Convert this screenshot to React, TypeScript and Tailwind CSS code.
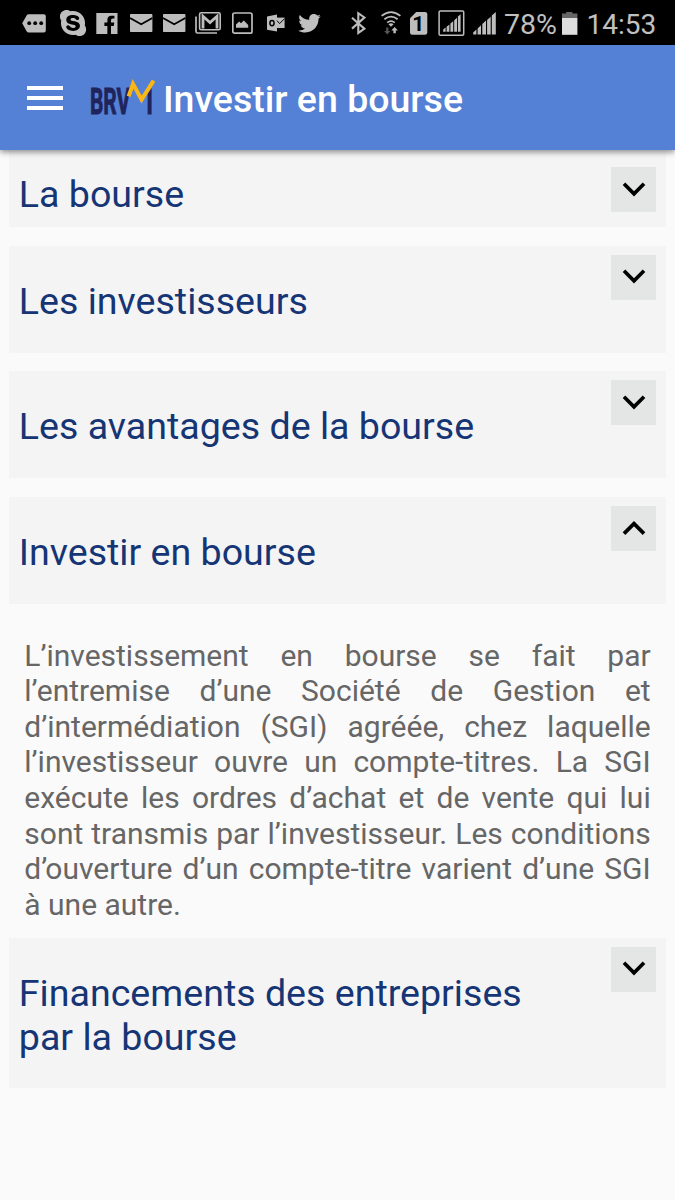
import { useState } from "react";
import type { ReactNode } from "react";
import { FaFacebookF, FaSkype, FaTwitter } from "react-icons/fa";

const GREY = "#bdbdbd";

interface Section {
  title: string;
  body?: string;
}

const SECTIONS: Section[] = [
  { title: "La bourse" },
  { title: "Les investisseurs" },
  { title: "Les avantages de la bourse" },
  {
    title: "Investir en bourse",
    body: "L’investissement en bourse se fait par l’entremise d’une Société de Gestion et d’intermédiation (SGI) agréée, chez laquelle l’investisseur ouvre un compte-titres. La SGI exécute les ordres d’achat et de vente qui lui sont transmis par l’investisseur. Les conditions d’ouverture d’un compte-titre varient d’une SGI à une autre.",
  },
  { title: "Financements des entreprises par la bourse" },
];

// Status bar glyph, the full 45px bar height, w px wide
function Glyph({ w, className, children }: { w: number; className?: string; children: ReactNode }) {
  return (
    <svg
      width={w}
      height={45}
      viewBox={`0 0 ${w} 45`}
      fill={GREY}
      className={`shrink-0 ${className ?? ""}`}
    >
      {children}
    </svg>
  );
}

function Mail({ className }: { className?: string }) {
  return (
    <Glyph w={23} className={className}>
      <rect y="14" width="22.4" height="18" rx="0.8" />
      <path d="M0 18l11.2 6.2L22.4 18" fill="none" stroke="#000" strokeWidth="1.8" />
    </Glyph>
  );
}

function StatusBar() {
  return (
    <div className="flex h-[45px] items-center bg-black pl-[22px] text-[28.5px] leading-[45px] text-[#c0c0c0]">
      <Glyph w={24}>
        <path d="M0.2 23.2L4.6 15.4Q5.3 14.2 6.7 14.2H21.8Q23.8 14.2 23.8 16.2V30.6Q23.8 32.6 21.8 32.6H6.7Q5.3 32.6 4.6 31.3Z" />
        <circle cx="7.2" cy="23.2" r="1.9" fill="#000" />
        <circle cx="13.2" cy="23.2" r="1.9" fill="#000" />
        <circle cx="19.2" cy="23.2" r="1.9" fill="#000" />
      </Glyph>
      <Glyph w={27} className="ml-[14px]">
        <FaSkype x="-2" y="8" size={30} />
      </Glyph>
      <Glyph w={22} className="ml-[9px]">
        <rect y="13" x="0.3" width="21.2" height="21" />
        <FaFacebookF x="4" y="15.4" size={18.8} color="#000" />
      </Glyph>
      <Mail className="ml-[12px]" />
      <Mail className="ml-[10px]" />
      <Glyph w={26} className="ml-[9px]">
        <path d="M1 16.5V31.4Q1 33 2.6 33H22" fill="none" stroke={GREY} strokeWidth="1.7" />
        <rect x="4.6" y="12.8" width="20.6" height="17" rx="1.6" fill="none" stroke={GREY} strokeWidth="1.6" />
        <path d="M8 28.5V16.3L15 22.6L22 16.3V28.5" fill="none" stroke={GREY} strokeWidth="2.8" />
      </Glyph>
      <Glyph w={21} className="ml-[11px]">
        <rect x="0.8" y="13" width="19.2" height="20.2" rx="1.8" fill="none" stroke={GREY} strokeWidth="1.7" />
        <path d="M4 27.7V24.6L7.2 21.4L9 23.2L11.8 20.4L16.2 25V27.7Z" />
      </Glyph>
      <Glyph w={18} className="ml-[14px]">
        <path d="M0 16.4L10 14.6V31.6L0 29.7Z" />
        <rect x="10" y="17.6" width="7.6" height="10.4" />
        <path d="M10 20.6L12.6 23.6L17.6 18.6" fill="none" stroke="#000" strokeWidth="1" />
        <ellipse cx="5" cy="23.1" rx="2.1" ry="2.6" fill="none" stroke="#000" strokeWidth="1.5" />
      </Glyph>
      <Glyph w={23} className="ml-[13px]">
        <FaTwitter x="0.2" y="12" size={22.6} />
      </Glyph>

      <Glyph w={17} className="ml-[30px]">
        <path
          d="M1 17.8L13.4 28.6L7.3 33V13.2L13.4 17.5L1 28.6"
          fill="none"
          stroke={GREY}
          strokeWidth="2.1"
        />
      </Glyph>
      <Glyph w={20} className="ml-[13px]">
        <g fill="none" stroke={GREY} strokeWidth="1.8">
          <path d="M0.6 15.9Q10 8.4 19.4 15.9" />
          <path d="M3.4 19.3Q10 14 16.6 19.3" />
          <path d="M6.2 22.6Q10 19.6 13.8 22.6" />
        </g>
        <path d="M7.4 24.2Q10 22.2 12.6 24.2L10 26.8Z" />
        <path d="M5.2 27.6H7.4V31H9.4L6.3 34.6L3.2 31H5.2Z" fill="#555" />
        <path d="M12.4 33.2H14.8V30.6H16.9L13.6 27L10.3 30.6H12.4Z" />
      </Glyph>
      <Glyph w={18} className="ml-[9px]">
        <path d="M6.2 12H15Q17.3 12 17.3 14.3V32.4Q17.3 34.7 15 34.7H2.3Q0 34.7 0 32.4V18.2Z" />
        <text x="8.4" y="30.8" fontSize="21" fontWeight="700" textAnchor="middle" fill="#000">
          1
        </text>
      </Glyph>
      <Glyph w={27} className="ml-[10px]">
        <rect x="1.1" y="10.9" width="24.6" height="24.4" rx="1.2" fill="none" stroke={GREY} strokeWidth="1.5" />
        <path d="M5.2 31.8V29.6L7.6 27.6V31.8ZM8.6 31.8V26.8L11.4 24.4V31.8ZM12.4 31.8V23.6L15.2 21.2V31.8ZM16.2 31.8V20.3L19 17.8V31.8ZM19.9 31.8V16.6L22.6 14.2V31.8Z" />
      </Glyph>
      <Glyph w={23} className="ml-[8px]">
        <path d="M0.2 34.6V32.4L3.4 29.6V34.6ZM4.6 34.6V28.4L8 25.2V34.6ZM9.3 34.6V24L13 20.6V34.6ZM14.1 34.6V20L17.7 16.8V34.6ZM18.8 34.6V15.4L22.8 12V34.6Z" />
      </Glyph>
      <span className="ml-[8px] w-[52px] shrink-0 whitespace-nowrap pt-[3px]">78%</span>
      <Glyph w={16} className="ml-[6px]">
        <path d="M4.2 12H10.4V13.5H15.4V18H0V13.5H4.2Z" fill="#666" />
        <rect y="18" width="15.4" height="16.8" fill="#dedede" />
      </Glyph>
      <span className="ml-[8.5px] whitespace-nowrap pt-[3px] text-[28px]">14:53</span>
    </div>
  );
}

function Logo() {
  return (
    <svg width="66" height="56" viewBox="0 -10 66 56" className="shrink-0">
      <text
        x="0"
        y="35.2"
        fontSize="37"
        fontWeight="700"
        fill="#1f245c"
        stroke="#1f245c"
        strokeWidth="0.9"
        textLength="61"
        lengthAdjust="spacingAndGlyphs"
        transform="scale(0.66 1)"
      >
        BRV
      </text>
      <path d="M57.6 14.5L61.6 9V35.6H57.6Z" fill="#1f245c" />
      <path d="M38.6 17.4L43 4.8L51.6 20.6L63.6 1.6" fill="none" stroke="#fbb615" strokeWidth="4" />
    </svg>
  );
}

function AppBar() {
  return (
    <header className="relative z-10 flex h-[105px] items-center bg-[#5481d5] pl-[27px] shadow-[0_2px_6px_rgba(0,0,0,0.45)]">
      <button type="button" aria-label="Menu" className="flex w-9 flex-col gap-[6px]">
        <span className="h-1 bg-white" />
        <span className="h-1 bg-white" />
        <span className="h-1 bg-white" />
      </button>
      <div className="-mt-0.5 ml-[27px] flex">
        <Logo />
      </div>
      <h1 className="ml-[7px] whitespace-nowrap pt-[4px] text-[37.5px] font-medium leading-none text-white">
        Investir en bourse
      </h1>
    </header>
  );
}

function Toggle({ open, onClick }: { open: boolean; onClick: () => void }) {
  return (
    <button
      type="button"
      onClick={onClick}
      className="flex h-[45px] w-[45px] shrink-0 items-center justify-center bg-[#e4e6e5]"
    >
      <svg width="24" height="16" viewBox="0 0 24 16" fill="none" stroke="#000" strokeWidth="3.7">
        <path d={open ? "M2 13.6L12 3.6L22 13.6" : "M2 1.8L12 11.8L22 1.8"} />
      </svg>
    </button>
  );
}

export default function App() {
  const [open, setOpen] = useState(3);

  return (
    <div className="min-h-[1200px] w-[675px] overflow-hidden bg-[#fafafa] font-['Roboto',sans-serif]">
      <StatusBar />
      <AppBar />
      <main className="px-[9.3px]">
        {SECTIONS.map((s, i) => (
          <section key={s.title}>
            <div
              className={`flex items-start justify-between bg-[#f4f4f4] px-[9.5px] ${
                i === 0 ? "h-[77px] pt-[17px]" : i === 4 ? "h-[150px] pt-[9px]" : "h-[106.8px] pt-[9px]"
              }`}
            >
              <h2
                className={`w-[540px] text-[37.6px] leading-[44px] text-[#163575] ${
                  i === 0 ? "pt-[4.6px]" : "pt-[24px]"
                }`}
              >
                {s.title}
              </h2>
              <Toggle open={open === i} onClick={() => setOpen(open === i ? -1 : i)} />
            </div>
            {s.body && open === i ? (
              <p className="px-[15px] pb-[15.6px] pt-[33.8px] text-justify text-[30px] leading-[35.6px] text-[#666]">
                {s.body}
              </p>
            ) : (
              <div className="h-[18.8px]" />
            )}
          </section>
        ))}
      </main>
    </div>
  );
}
